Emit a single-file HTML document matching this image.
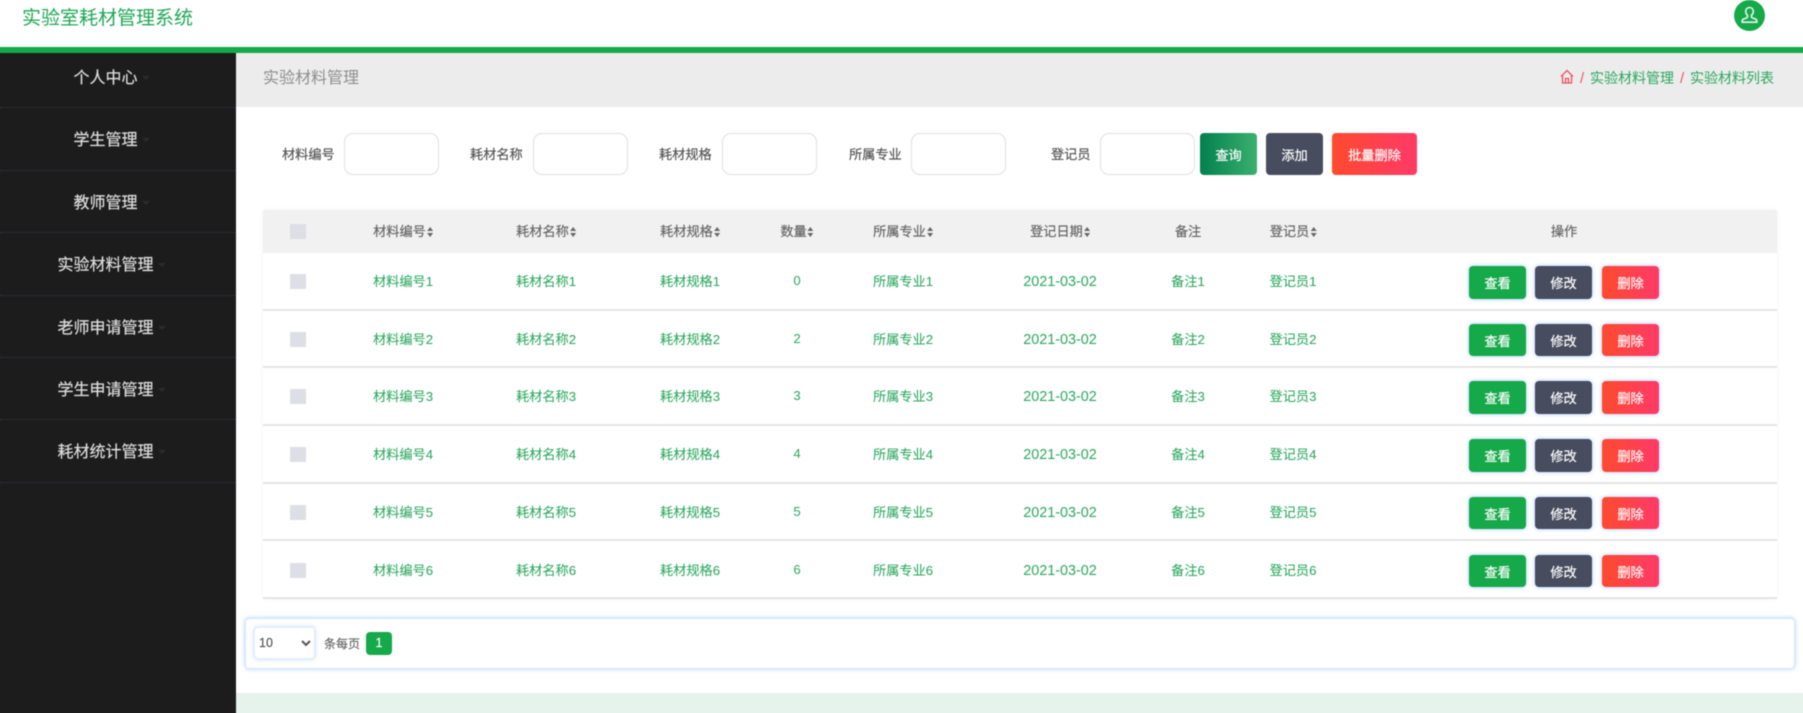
<!DOCTYPE html>
<html lang="zh"><head><meta charset="utf-8"><title>实验室耗材管理系统</title>
<style>
html{margin:0;padding:0;width:1803px;height:713px;overflow:hidden;background:#fff}
body{margin:0;padding:0;width:1803px;height:713px;overflow:hidden;background:#fff}
#w{width:1803px;height:713px;background:#fff;font-family:"Liberation Sans","Noto Sans CJK SC",sans-serif;position:relative;filter:blur(.45px);-webkit-text-stroke:.18px}
div,span,button,input{box-sizing:border-box}
.a{position:absolute}
.title{left:22px;top:5px;font-size:19px;line-height:28px;color:#1fa855;-webkit-text-stroke:0}
.bar{left:-6px;top:47px;width:1815px;height:6px;background:#16a94a}
.av{left:1734px;top:0;width:31px;height:31px;border-radius:50%;background:#16a94a}
.side{left:-6px;top:53px;width:242px;height:666px;background:#1c1c1c}
.mi{position:absolute;left:6px;width:236px;height:62.4px;border-bottom:1px dotted #2f3a48;color:#dedede;font-size:16px;line-height:24px;text-align:center}
.mi span{position:absolute;top:21px;left:0;width:211px;text-align:center}
.mi i{position:absolute;top:30px;width:0;height:0;border:4px solid transparent;border-top-color:#2b2b2b}
.band{left:236px;top:53px;width:1573px;height:54px;background:#ececec}
.band .h{position:absolute;left:27px;top:14px;font-size:16px;line-height:24px;color:#8e8e8e;-webkit-text-stroke:0}
.crumb{font-size:14px;line-height:20px;color:#2aa85e;top:68px;white-space:nowrap;-webkit-text-stroke:0}
.sl{color:#f0535f;font-size:15px}
.lb{top:145px;font-size:13.2px;line-height:20px;color:#555;white-space:nowrap}
.ip{top:133px;width:95px;height:42px;border:1.5px solid #e0e0e0;border-radius:9px;background:#fff}
.sb{top:133px;height:42px;border-radius:4px;color:#fff;font-size:13.2px;line-height:45px;text-align:center}
.tb{left:263px;top:210px;width:1514px;height:389px;box-shadow:0 0 5px rgba(0,0,0,.05)}
.th{left:263px;top:210px;width:1514px;height:43px;background:#f1f1f1}
.row{position:absolute;left:263px;width:1514px;height:57.7px;border-bottom:2px solid #e4e4e4;background:#fff}
.c{position:absolute;transform:translateX(-50%);white-space:nowrap;font-size:13.2px;line-height:20px;color:#2aa85e}
.row .c{top:19px;-webkit-text-stroke:.06px}
.row .c.dt{top:19px;font-size:14.4px;-webkit-text-stroke:0}
.row .c.n{top:18px;-webkit-text-stroke:0}
.th .c{top:12px;color:#666}
.c b{font-weight:normal;display:inline-block;width:6px;height:10px;position:relative;vertical-align:-1px;margin-left:1px}
.c b:before,.c b:after{content:"";position:absolute;left:0;border:3px solid transparent}
.c b:before{top:-3px;border-bottom:4px solid #666}
.c b:after{top:6px;border-top:4px solid #666}
.ck{position:absolute;left:27px;width:16px;height:15px;background:#dcdfe6}
.th .ck{top:14px}
.row .ck{top:21px}
.btn{position:absolute;top:13px;width:57px;height:32.5px;border-radius:4px;color:#fff;font-size:13.2px;line-height:35px;text-align:center;box-shadow:0 0 4px rgba(90,160,255,.55)}
.v{left:1206px;background:#16a94a}
.e{left:1272px;background:#474c5e}
.d{left:1339px;background:linear-gradient(90deg,#ff4a2f,#ff3a68)}
.pg{left:245px;top:618px;width:1550px;height:51px;background:#fff;border-radius:4px;border:1px solid #d5e7ff;box-shadow:0 0 4px rgba(120,180,255,.6)}
select{position:absolute;left:254px;top:627px;width:61px;height:32px;background:#fff;border:1px solid #e3eeff;border-radius:4px;box-shadow:0 0 4px rgba(120,180,255,.55);font-family:"Liberation Sans",sans-serif;font-size:12.5px;color:#555;padding:0;outline:0}
.foot{left:236px;top:693px;width:1573px;height:26px;background:#e6f2ec}
</style></head><body><div id="w">
<div class="a title">实验室耗材管理系统</div>
<div class="a av"><svg width="31" height="31" viewBox="0 0 31 31" fill="none" stroke="#e6f7ec" stroke-width="1.6"><path d="M15.5 7.500c-2.300 0-3.800 1.700-3.800 3.900 0 1.600.8 3 1.800 3.800v1.500c0 .7-.4 1-1.200 1.300-1.900.6-4.100 1.200-4.100 2.800v1.400h14.600v-1.400c0-1.600-2.200-2.200-4.100-2.800-.8-.3-1.200-.6-1.200-1.300v-1.500c1-.8 1.800-2.200 1.800-3.800 0-2.200-1.500-3.900-3.800-3.900z"/></svg></div>
<div class="a bar"></div>
<div class="a side">
<div class="mi" style="top:-7px"><span>个人中心</span><i style="left:142px"></i></div>
<div class="mi" style="top:55.4px"><span>学生管理</span><i style="left:142px"></i></div>
<div class="mi" style="top:117.800px"><span>教师管理</span><i style="left:142px"></i></div>
<div class="mi" style="top:180.200px"><span>实验材料管理</span><i style="left:158px"></i></div>
<div class="mi" style="top:242.600px"><span>老师申请管理</span><i style="left:158px"></i></div>
<div class="mi" style="top:305px"><span>学生申请管理</span><i style="left:158px"></i></div>
<div class="mi" style="top:367.400px"><span>耗材统计管理</span><i style="left:158px"></i></div>
</div>
<div class="a band"><div class="h">实验材料管理</div></div>
<svg class="a" style="left:1560px;top:69px" width="14" height="15" viewBox="0 0 14 15" fill="none" stroke="#ef5060" stroke-width="1.300"><path d="M1 7.500 7 1.500l6 6M2.500 6.500V14h9V6.500M5.500 14V9.500h3V14"/></svg>
<div class="a crumb" style="left:1580px"><span class="sl">/</span></div>
<div class="a crumb" style="left:1590px">实验材料管理</div>
<div class="a crumb" style="left:1680px"><span class="sl">/</span></div>
<div class="a crumb" style="left:1690px">实验材料列表</div>

<div class="a lb" style="left:282px">材料编号</div><div class="a ip" style="left:344px"></div>
<div class="a lb" style="left:470px">耗材名称</div><div class="a ip" style="left:533px"></div>
<div class="a lb" style="left:659px">耗材规格</div><div class="a ip" style="left:722px"></div>
<div class="a lb" style="left:849px">所属专业</div><div class="a ip" style="left:911px"></div>
<div class="a lb" style="left:1051px">登记员</div><div class="a ip" style="left:1100px"></div>
<div class="a sb" style="left:1200px;width:57px;background:linear-gradient(90deg,#03804f,#3bb06e)">查询</div>
<div class="a sb" style="left:1266px;width:57px;background:#474c5e">添加</div>
<div class="a sb" style="left:1332px;width:85px;background:linear-gradient(90deg,#ff4a2f,#ff3a68)">批量删除</div>

<div class="a tb"></div>
<div class="a th"><span class="ck"></span>
<span class="c" style="left:140px">材料编号<b></b></span><span class="c" style="left:283px">耗材名称<b></b></span><span class="c" style="left:427px">耗材规格<b></b></span><span class="c" style="left:534px">数量<b></b></span><span class="c" style="left:640px">所属专业<b></b></span><span class="c" style="left:797px">登记日期<b></b></span><span class="c" style="left:925px">备注</span><span class="c" style="left:1030px">登记员<b></b></span><span class="c" style="left:1301px">操作</span></div>

<div class="row" style="top:253px"><span class="ck"></span><span class="c" style="left:140px">材料编号1</span><span class="c" style="left:283px">耗材名称1</span><span class="c" style="left:427px">耗材规格1</span><span class="c n" style="left:534px">0</span><span class="c" style="left:640px">所属专业1</span><span class="c dt" style="left:797px">2021-03-02</span><span class="c" style="left:925px">备注1</span><span class="c" style="left:1030px">登记员1</span><span class="btn v">查看</span><span class="btn e">修改</span><span class="btn d">删除</span></div>
<div class="row" style="top:310.700px"><span class="ck"></span><span class="c" style="left:140px">材料编号2</span><span class="c" style="left:283px">耗材名称2</span><span class="c" style="left:427px">耗材规格2</span><span class="c n" style="left:534px">2</span><span class="c" style="left:640px">所属专业2</span><span class="c dt" style="left:797px">2021-03-02</span><span class="c" style="left:925px">备注2</span><span class="c" style="left:1030px">登记员2</span><span class="btn v">查看</span><span class="btn e">修改</span><span class="btn d">删除</span></div>
<div class="row" style="top:368.400px"><span class="ck"></span><span class="c" style="left:140px">材料编号3</span><span class="c" style="left:283px">耗材名称3</span><span class="c" style="left:427px">耗材规格3</span><span class="c n" style="left:534px">3</span><span class="c" style="left:640px">所属专业3</span><span class="c dt" style="left:797px">2021-03-02</span><span class="c" style="left:925px">备注3</span><span class="c" style="left:1030px">登记员3</span><span class="btn v">查看</span><span class="btn e">修改</span><span class="btn d">删除</span></div>
<div class="row" style="top:426.100px"><span class="ck"></span><span class="c" style="left:140px">材料编号4</span><span class="c" style="left:283px">耗材名称4</span><span class="c" style="left:427px">耗材规格4</span><span class="c n" style="left:534px">4</span><span class="c" style="left:640px">所属专业4</span><span class="c dt" style="left:797px">2021-03-02</span><span class="c" style="left:925px">备注4</span><span class="c" style="left:1030px">登记员4</span><span class="btn v">查看</span><span class="btn e">修改</span><span class="btn d">删除</span></div>
<div class="row" style="top:483.800px"><span class="ck"></span><span class="c" style="left:140px">材料编号5</span><span class="c" style="left:283px">耗材名称5</span><span class="c" style="left:427px">耗材规格5</span><span class="c n" style="left:534px">5</span><span class="c" style="left:640px">所属专业5</span><span class="c dt" style="left:797px">2021-03-02</span><span class="c" style="left:925px">备注5</span><span class="c" style="left:1030px">登记员5</span><span class="btn v">查看</span><span class="btn e">修改</span><span class="btn d">删除</span></div>
<div class="row" style="top:541.500px"><span class="ck"></span><span class="c" style="left:140px">材料编号6</span><span class="c" style="left:283px">耗材名称6</span><span class="c" style="left:427px">耗材规格6</span><span class="c n" style="left:534px">6</span><span class="c" style="left:640px">所属专业6</span><span class="c dt" style="left:797px">2021-03-02</span><span class="c" style="left:925px">备注6</span><span class="c" style="left:1030px">登记员6</span><span class="btn v">查看</span><span class="btn e">修改</span><span class="btn d">删除</span></div>

<div class="a pg"></div>
<select><option>10</option></select>
<div class="a" style="left:324px;top:634px;font-size:12px;line-height:20px;color:#666">条每页</div>
<div class="a" style="left:366px;top:632px;width:26px;height:23px;border-radius:4px;background:#16a94a;color:#fff;font-size:12.500px;line-height:23px;text-align:center">1</div>
<div class="a foot"></div>
</div></body></html>
